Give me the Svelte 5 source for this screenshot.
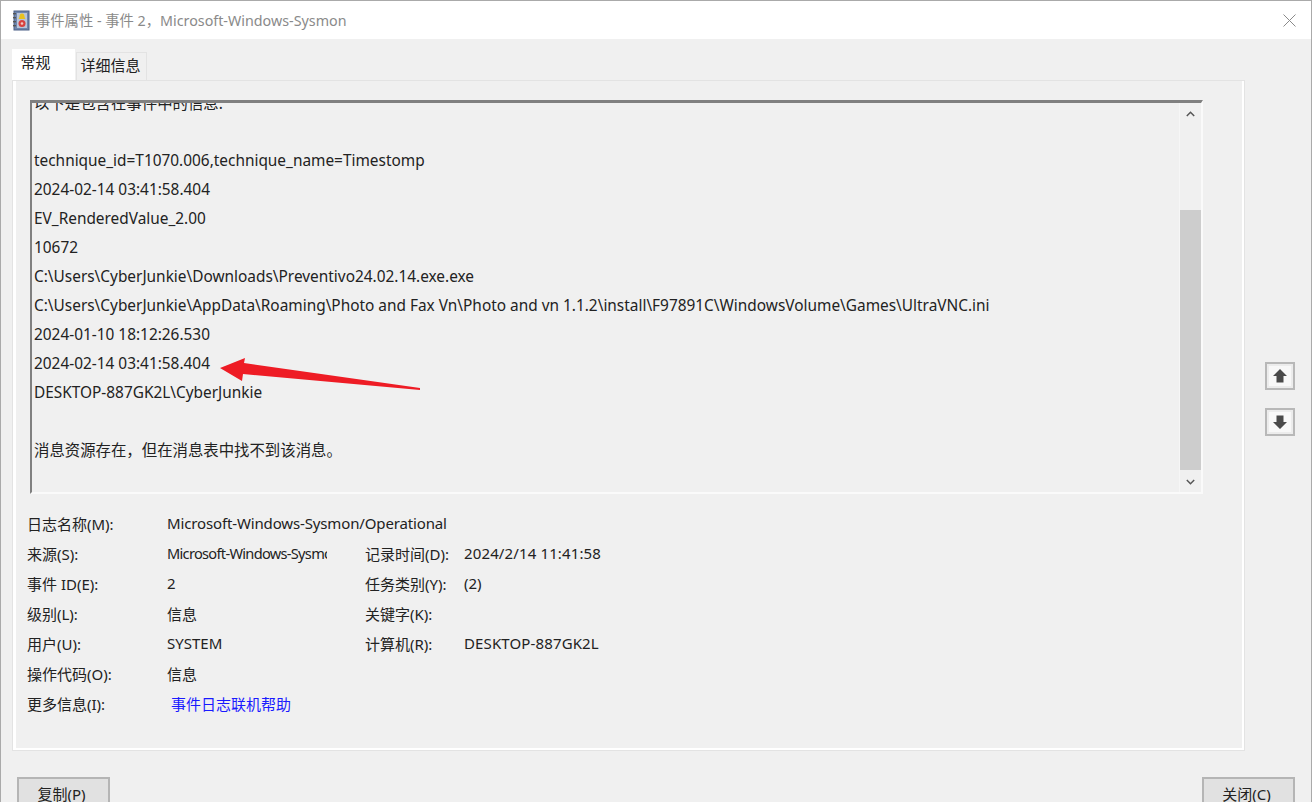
<script>
  const lines = [
    "",
    "technique_id=T1070.006,technique_name=Timestomp",
    "2024-02-14 03:41:58.404",
    "EV_RenderedValue_2.00",
    "10672",
    "C:\\Users\\CyberJunkie\\Downloads\\Preventivo24.02.14.exe.exe",
    "C:\\Users\\CyberJunkie\\AppData\\Roaming\\Photo and Fax Vn\\Photo and vn 1.1.2\\install\\F97891C\\WindowsVolume\\Games\\UltraVNC.ini",
    "2024-01-10 18:12:26.530",
    "2024-02-14 03:41:58.404",
    "DESKTOP-887GK2L\\CyberJunkie",
    "",
    "消息资源存在，但在消息表中找不到该消息。",
  ];
</script>

<div class="window">
  <header class="titlebar">
    <svg class="app-icon" width="18" height="21" viewBox="0 0 18 21">
      <rect x="2" y="1" width="15" height="19" fill="#6f86ad" stroke="#4b5f85" stroke-width="1" />
      <rect x="1" y="3" width="3" height="1.4" fill="#555" />
      <rect x="1" y="7" width="3" height="1.4" fill="#555" />
      <rect x="1" y="11" width="3" height="1.4" fill="#555" />
      <rect x="1" y="15" width="3" height="1.4" fill="#555" />
      <rect x="5" y="3" width="10" height="15" fill="#b9c5da" />
      <path d="M10 3.5c2 0 2.4 1.8 2.6 3.4.1 1 .6 1.6 1 2.1H6.4c.4-.5.9-1.100 1-2.100C7.600 5.300 8 3.500 10 3.500z" fill="#e8c21f" />
      <circle cx="10" cy="13.500" r="3.500" fill="#d8413f" />
      <circle cx="10" cy="13.500" r="1.300" fill="#f3c6c0" />
    </svg>
    <span class="title">事件属性 - 事件 2，Microsoft-Windows-Sysmon</span>
    <svg class="close" width="13" height="13" viewBox="0 0 13 13">
      <path d="M.5.5l12 12M12.500.5l-12 12" stroke="#8a8a8a" stroke-width="1" fill="none" />
    </svg>
  </header>

  <div class="body">
    <div class="main">
      <div class="tabs">
        <div class="tab active">常规</div>
        <div class="tab">详细信息</div>
      </div>
      <section class="panel">
        <div class="logbox">
          <div class="logtext">
            <div class="clipped">以下是包含在事件中的信息:</div>
            {#each lines as line}
              <div class="line">{line}</div>
            {/each}
          </div>
          <div class="scrollbar">
            <div class="sb-btn">
              <svg width="9" height="6" viewBox="0 0 9 6"><path d="M.8 5L4.500 1.300 8.200 5" stroke="#555" stroke-width="1.500" fill="none" /></svg>
            </div>
            <div class="sb-track"><div class="sb-thumb"></div></div>
            <div class="sb-btn">
              <svg width="9" height="6" viewBox="0 0 9 6"><path d="M.8 1L4.500 4.700 8.200 1" stroke="#555" stroke-width="1.500" fill="none" /></svg>
            </div>
          </div>
          <svg class="arrow" width="204" height="36" viewBox="0 0 204 36">
            <polygon points="0,10 25,0 24,5 200,30 200,32 23,16 22,23" fill="#ee1c25" />
          </svg>
        </div>

        <div class="meta">
          <span>日志名称(M):</span><span class="wide name">Microsoft-Windows-Sysmon/Operational</span>
          <span>来源(S):</span><span class="cut">Microsoft-Windows-Sysmon</span><span>记录时间(D):</span><span class="val">2024/2/14 11:41:58</span>
          <span>事件 ID(E):</span><span>2</span><span>任务类别(Y):</span><span>(2)</span>
          <span>级别(L):</span><span>信息</span><span>关键字(K):</span><span></span>
          <span>用户(U):</span><span>SYSTEM</span><span>计算机(R):</span><span class="val">DESKTOP-887GK2L</span>
          <span>操作代码(O):</span><span class="wide">信息</span>
          <span>更多信息(I):</span><span class="wide link">事件日志联机帮助</span>
        </div>
      </section>
    </div>

    <div class="movers">
      <button class="mover" aria-label="上一个">
        <svg width="16" height="16" viewBox="0 0 16 16"><path d="M8 1L15 8H11.500V14.500H4.500V8H1z" fill="#4a4a4a" /></svg>
      </button>
      <button class="mover" aria-label="下一个">
        <svg width="16" height="16" viewBox="0 0 16 16"><path d="M8 15L15 8H11.500V1.500H4.500V8H1z" fill="#4a4a4a" /></svg>
      </button>
    </div>
  </div>

  <footer class="actions">
    <button class="btn">复制(P)</button>
    <button class="btn">关闭(C)</button>
  </footer>
</div>

<style>
  :global(body) {
    margin: 0;
    overflow: hidden;
  }

  .window {
    width: 1312px;
    height: 802px;
    box-sizing: border-box;
    border: 1px solid #aaa;
    border-bottom: 0;
    background: #f0f0f0;
    color: #222;
    font-family: "Noto Sans", "Noto Sans CJK SC", sans-serif;
    font-size: 15px;
    overflow: hidden;
  }

  .titlebar {
    height: 38px;
    background: #fff;
    display: flex;
    align-items: center;
    padding: 0 15px 0 11px;
  }

  .app-icon {
    margin-right: 6px;
  }

  .title {
    flex: 1;
    color: #8a8a8a;
    font-size: 14.3px;
    position: relative;
    top: -1px;
  }

  .body {
    display: flex;
  }

  .main {
    width: 1233px;
    margin-left: 11px;
    padding-top: 10px;
  }

  .tabs {
    display: flex;
    align-items: flex-end;
    height: 31px;
  }

  .tab {
    height: 28px;
    width: 71px;
    margin-left: 1px;
    box-sizing: border-box;
    border: 1px solid #e3e3e3;
    border-bottom: 0;
    text-align: center;
    line-height: 25px;
    padding-right: 2px;
    background: #f0f0f0;
  }

  .tab.active {
    height: 31px;
    width: 63px;
    margin-left: 0;
    background: #fff;
    border-color: #fff;
    line-height: 25px;
    padding-right: 16px;
  }

  .panel {
    height: 671px;
    box-sizing: border-box;
    border: 3px solid #fff;
    border-top-width: 1px;
    border-left-width: 4px;
    outline: 1px solid #e3e3e3;
    outline-offset: -1px;
    padding: 19px 39px 0 14px;
  }

  .logbox {
    position: relative;
    display: flex;
    height: 394px;
    box-sizing: border-box;
    border-top: 3px solid #808080;
    border-left: 2px solid #808080;
    border-right: 2px solid #fafafa;
    border-bottom: 2px solid #fafafa;
  }

  .logtext {
    flex: 1;
    overflow: hidden;
    padding-left: 2px;
    white-space: nowrap;
    font-size: 15.4px;
  }

  .clipped {
    height: 14px;
    line-height: 2px;
  }

  .line {
    height: 29px;
    line-height: 29px;
  }

  .scrollbar {
    width: 22px;
    display: flex;
    flex-direction: column;
    border-left: 1px solid #f6f6f6;
    box-sizing: border-box;
  }

  .sb-btn {
    height: 21px;
    display: flex;
    align-items: center;
    justify-content: center;
  }

  .sb-track {
    flex: 1;
    padding-top: 86px;
    box-sizing: border-box;
  }

  .sb-thumb {
    height: 260px;
    background: #cdcdcd;
  }

  .arrow {
    position: absolute;
    left: 188px;
    top: 255px;
  }

  .meta {
    display: grid;
    grid-template-columns: 140px 198px 99px 200px;
    grid-auto-rows: 30px;
    align-items: center;
    margin: 14px 0 0 -3px;
  }

  .wide {
    grid-column: span 3;
  }

  .name {
    letter-spacing: -0.14px;
  }

  .val {
    letter-spacing: 0.13px;
  }

  .cut {
    width: 160px;
    overflow: hidden;
    white-space: nowrap;
    font-size: 14.6px;
    letter-spacing: -0.7px;
  }

  .link {
    color: #1a1aff;
    padding-left: 4px;
  }

  .movers {
    display: flex;
    flex-direction: column;
    gap: 18px;
    margin: 323px 0 0 20px;
  }

  .mover {
    width: 30px;
    height: 28px;
    padding: 0;
    background: #f8f8f8;
    border: 2px solid #b8b8b8;
    box-shadow: inset 0 0 0 2px #ececec;
    display: flex;
    align-items: center;
    justify-content: center;
  }

  .actions {
    display: flex;
    justify-content: space-between;
    padding: 26px 16px 0;
  }

  .btn {
    width: 93px;
    height: 32px;
    padding: 0 4px 0 0;
    background: #e1e1e1;
    border: 2px solid #b5b5b5;
    color: #222;
    font: inherit;
  }
</style>
